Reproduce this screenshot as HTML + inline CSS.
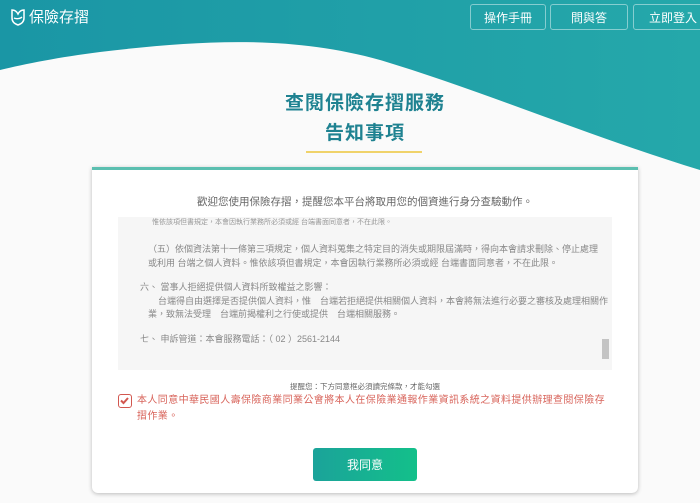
<!DOCTYPE html>
<html><head><meta charset="utf-8"><style>
*{margin:0;padding:0;box-sizing:border-box}
body{width:700px;height:503px;overflow:hidden;background:#fafafa;font-family:"Liberation Sans","Noto Sans CJK TC",sans-serif;position:relative}
.hdr{position:absolute;left:0;top:0}
.logo{position:absolute;left:10px;top:6px;color:#fff;font-size:15px;display:flex;align-items:center;gap:3px}
.btn{position:absolute;top:4px;height:26px;border:1px solid rgba(255,255,255,.45);border-radius:3px;color:#fff;font-size:12px;display:flex;align-items:center;justify-content:center}
.t1{position:absolute;left:0;width:730px;text-align:center;color:#1f8291;font-size:19px;font-weight:bold;letter-spacing:1px}
.card{position:absolute;left:92px;top:167px;width:546px;height:326px;background:#fff;border-top:3px solid #5bbfb0;box-shadow:0 1px 4px rgba(0,0,0,.25);border-radius:0 0 6px 6px}
.box{position:absolute;left:26px;top:47px;width:494px;height:153px;background:#f6f6f6;overflow:hidden;color:#888;font-size:9px}
.box div{position:absolute;white-space:nowrap}
</style></head><body>
<svg class="hdr" width="700" height="170"><defs><linearGradient id="g" x1="0" x2="1"><stop offset="0" stop-color="#1a96a5"/><stop offset="1" stop-color="#25a8aa"/></linearGradient></defs>
<path d="M0 0H700V170C600 140 480 90 380 60C290 35 200 40 100 52C60 57 25 64 0 70Z" fill="url(#g)"/></svg>
<div class="logo"><svg width="16" height="18" viewBox="0 0 16 18"><path d="M2 2c3 0 5 2 6 4 1-2 3-4 6-4v8c0 4-3 6-6 7-3-1-6-3-6-7z" fill="none" stroke="#fff" stroke-width="1.5"/><path d="M4 10c2 1 6 1 8-1" stroke="#fff" fill="none" stroke-width="1.3"/></svg>保險存摺</div>
<div class="btn" style="left:470px;width:76px">操作手冊</div>
<div class="btn" style="left:550px;width:78px">問與答</div>
<div class="btn" style="left:633px;width:80px">立即登入</div>
<div class="t1" style="top:88px">查閱保險存摺服務</div>
<div class="t1" style="top:118px">告知事項</div>
<div style="position:absolute;left:306px;top:151px;width:116px;height:2px;background:#f0d36a"></div>
<div class="card">
<div style="position:absolute;top:24px;width:100%;text-align:center;color:#666;font-size:10.5px">歡迎您使用保險存摺，提醒您本平台將取用您的個資進行身分查驗動作。</div>
<div class="box">
<div style="left:34px;top:0px;font-size:7px;color:#999">惟依該項但書規定，本會因執行業務所必須或經 台端書面同意者，不在此限。</div>
<div style="left:30px;top:25px">（五）依個資法第十一條第三項規定，個人資料蒐集之特定目的消失或期限屆滿時，得向本會請求刪除、停止處理</div>
<div style="left:30px;top:39px">或利用 台端之個人資料。惟依該項但書規定，本會因執行業務所必須或經 台端書面同意者，不在此限。</div>
<div style="left:22px;top:63px">六、 當事人拒絕提供個人資料所致權益之影響：</div>
<div style="left:40px;top:77px">台端得自由選擇是否提供個人資料，惟　台端若拒絕提供相關個人資料，本會將無法進行必要之審核及處理相關作</div>
<div style="left:30px;top:90px">業，致無法受理　台端前揭權利之行使或提供　台端相關服務。</div>
<div style="left:22px;top:115px">七、 申訴管道：本會服務電話：（ 02 ）2561-2144</div>
<div style="left:484px;top:122px;width:7px;height:20px;background:#c4c4c4"></div>
</div>
<div style="position:absolute;top:211px;width:100%;text-align:center;color:#666;font-size:7.5px">提醒您：下方同意框必須讀完條款，才能勾選</div>
<div style="position:absolute;left:26px;top:224px;width:14px;height:14px;border:1.5px solid #d2574f;border-radius:3px"><svg width="11" height="11" viewBox="0 0 11 11" style="position:absolute;left:0;top:0"><path d="M2 5.5l2.5 2.5 4.5-5" stroke="#d2574f" stroke-width="2" fill="none"/></svg></div>
<div style="position:absolute;left:45px;top:223px;white-space:nowrap;color:#d8645b;font-size:10px;line-height:16px;letter-spacing:0.4px">本人同意中華民國人壽保險商業同業公會將本人在保險業通報作業資訊系統之資料提供辦理查閱保險存<br>摺作業。</div>
<div style="position:absolute;left:221px;top:278px;width:104px;height:33px;border-radius:3px;background:linear-gradient(90deg,#1ba39a,#13c08a);color:#fff;font-size:12px;display:flex;align-items:center;justify-content:center">我同意</div>
</div>
</body></html>
